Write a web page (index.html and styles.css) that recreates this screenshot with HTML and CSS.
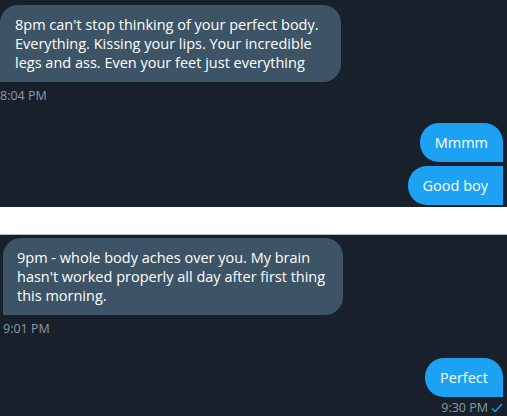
FILE: index.html
```html
<!DOCTYPE html>
<html lang="en">

<head>
    <meta charset="UTF-8">
    <meta name="viewport" content="width=device-width, initial-scale=1.0">
    <title>Messages</title>
    <link rel="stylesheet" href="styles.css">
</head>

<body>
    <div class="panel panel-top">
        <div class="msg received">
            <div class="bubble">8pm can't stop thinking of your perfect body. Everything. Kissing your lips. Your incredible legs and ass. Even your feet just everything</div>
            <div class="time">8:04 PM</div>
        </div>
        <div class="msg sent">
            <div class="bubble first">Mmmm</div>
            <div class="bubble last">Good boy</div>
        </div>
    </div>

    <div class="gap"></div>

    <div class="panel panel-bottom">
        <div class="msg received">
            <div class="bubble">9pm - whole body aches over you. My brain hasn't worked properly all day after first thing this morning.</div>
            <div class="time">9:01 PM</div>
        </div>
        <div class="msg sent">
            <div class="bubble single">Perfect</div>
            <div class="time stamp">9:30 PM
                <svg class="check" width="12" height="10" viewBox="0 0 12 10">
                    <path d="M1 5.5 L4 8.5 L11 1" fill="none" stroke="#1da1f2" stroke-width="1.4"/>
                </svg>
            </div>
        </div>
    </div>
</body>

</html>
```

FILE: styles.css
```css
body {
    margin: 0;
    background-color: #ffffff;
    font-family: "Open Sans", "Noto Sans", Arial, sans-serif;
    width: 507px;
    height: 416px;
    overflow: hidden;
}

.panel {
    background-color: #18212b;
    display: flex;
    flex-direction: column;
    overflow: hidden;
}

.panel-top {
    height: 207px;
    padding-top: 5px;
    box-sizing: border-box;
}

.gap {
    height: 27px;
    background-color: #ffffff;
    border-bottom: 1px solid #b9bcbf;
}

.panel-bottom {
    height: 181px;
    padding: 3px 0 0 3px;
    box-sizing: border-box;
}

.msg {
    display: flex;
    flex-direction: column;
}

.received {
    align-items: flex-start;
}

.sent {
    align-items: flex-end;
    padding-right: 4px;
    gap: 4px;
}

.bubble {
    color: #ffffff;
    font-size: 14.5px;
    line-height: 19px;
}

.received .bubble {
    background-color: #3d5466;
    padding: 10px 15px 10px 15px;
    width: 311px;
    border-radius: 18px 18px 18px 0;
}

.panel-bottom .received .bubble {
    padding-left: 14px;
}

.sent .bubble {
    background-color: #1da1f2;
    height: 39px;
    box-sizing: border-box;
    padding: 0 15px;
    display: flex;
    align-items: center;
}

.sent .first {
    margin-top: 19px;
    border-radius: 19px 19px 0 19px;
}

.sent .last {
    border-radius: 19px 0 0 19px;
}

.sent .single {
    margin-top: 21px;
    border-radius: 19px 19px 0 19px;
}

.time {
    color: #8899a6;
    font-size: 12.5px;
    line-height: 16px;
    margin-top: 6px;
    display: flex;
    align-items: center;
    gap: 3px;
}

.sent .stamp {
    margin-top: -1px;
}

.check {
    display: block;
}
```
